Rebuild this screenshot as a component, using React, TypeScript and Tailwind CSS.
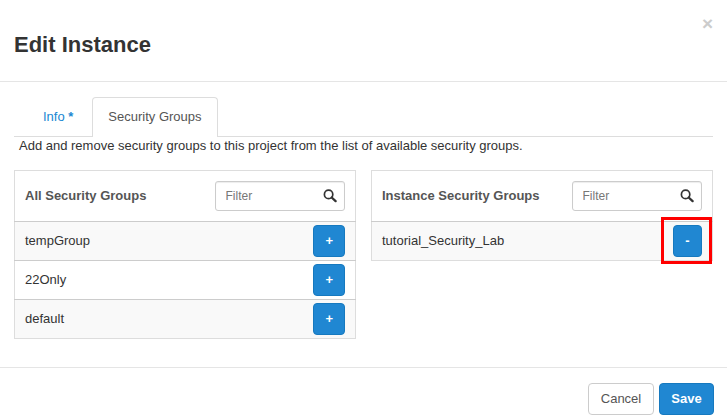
import { useState } from "react";

type Group = { name: string };

type TransferTableProps = {
  title: string;
  groups: Group[];
  action: "+" | "-";
  highlighted?: boolean;
};

function SearchIcon() {
  return (
    <svg
      viewBox="0 0 14 14"
      className="pointer-events-none absolute top-2 right-2 size-[14px]"
      fill="none"
      stroke="#333333"
      aria-hidden="true"
    >
      <circle cx="5.6" cy="5.4" r="4.2" strokeWidth="1.7" />
      <path d="M8.7 8.5 12.6 12.1" strokeWidth="2.3" strokeLinecap="round" />
    </svg>
  );
}

function TransferTable({ title, groups, action, highlighted }: TransferTableProps) {
  const [filter, setFilter] = useState("");
  const rows = groups.filter((group) => group.name.toLowerCase().includes(filter.toLowerCase()));

  return (
    <table className="w-full border-collapse border border-[#dddddd] text-[13px] leading-[18px]">
      <thead>
        <tr className="h-[51px]">
          <th scope="col" className="px-[10px] text-left font-bold text-[#555555]">
            {title}
          </th>
          <th scope="col" className="w-[151px] px-[10px] font-normal">
            <label className="relative block">
              <input
                type="text"
                aria-label={`Filter ${title}`}
                placeholder="Filter"
                value={filter}
                onChange={(event) => setFilter(event.target.value)}
                className="block h-[30px] w-full rounded-[3px] border border-[#cccccc] bg-white pr-7 pl-[10px] text-xs text-[#555555] shadow-[inset_0_1px_1px_rgba(0,0,0,0.075)] placeholder:text-[#777777]"
              />
              <SearchIcon />
            </label>
          </th>
        </tr>
      </thead>
      <tbody>
        {rows.map((group) => (
          <tr key={group.name} className="h-[39px] border-t border-[#cccccc] odd:bg-[#f9f9f9]">
            <td className="px-[10px]">{group.name}</td>
            <td className="px-[10px]">
              <div className="flex justify-end">
                <div className="relative">
                  <button
                    type="button"
                    className="block h-8 min-w-[29px] rounded-[4px] border border-[#1679bf] bg-[#2087d2] px-[11px] text-[13px] font-bold text-white"
                  >
                    {action}
                  </button>
                  {highlighted && (
                    <span className="pointer-events-none absolute -top-2 -right-[10px] -bottom-[7px] -left-3 border-3 border-[#ff0000]" />
                  )}
                </div>
              </div>
            </td>
          </tr>
        ))}
      </tbody>
    </table>
  );
}

const availableGroups: Group[] = [{ name: "tempGroup" }, { name: "22Only" }, { name: "default" }];
const instanceGroups: Group[] = [{ name: "tutorial_Security_Lab" }];

export default function App() {
  return (
    <div className="min-h-screen bg-white font-['Liberation_Sans',Arial,sans-serif] text-[13px] leading-[18px] text-[#333333]">
      <header className="flex items-start justify-between border-b border-[#e5e5e5] px-[14px] pt-[14px] pb-[22px]">
        <h1 className="mt-[17px] text-[22px] leading-7 font-bold">Edit Instance</h1>
        <button type="button" aria-label="Close" className="text-[19px] leading-5 font-bold text-[#cccccc]">
          ×
        </button>
      </header>

      <main className="px-[14px] pt-[15px] pb-7">
        <nav className="flex gap-[3px] border-b border-[#dddddd] pl-[13px]">
          <a href="#info" className="px-4 pt-[11px] pb-[10px] text-[#2087d2]">
            Info <span className="font-bold">*</span>
          </a>
          <a
            href="#security-groups"
            aria-current="page"
            className="-mb-px rounded-t-[4px] border border-b-0 border-[#dddddd] bg-white px-[15px] pt-[10px] pb-[11px] text-[#555555]"
          >
            Security Groups
          </a>
        </nav>

        <p className="px-[5px]">
          Add and remove security groups to this project from the list of available security groups.
        </p>

        <div className="mt-[15px] grid grid-cols-2 items-start gap-[15px]">
          <TransferTable title="All Security Groups" groups={availableGroups} action="+" />
          <TransferTable title="Instance Security Groups" groups={instanceGroups} action="-" highlighted />
        </div>
      </main>

      <footer className="flex justify-end gap-[5px] border-t border-[#e5e5e5] px-[13px] pt-[15px]">
        <button type="button" className="h-8 w-[66px] rounded-[4px] border border-[#cccccc] bg-white text-[#555555]">
          Cancel
        </button>
        <button type="button" className="h-8 w-[55px] rounded-[4px] border border-[#1679bf] bg-[#2087d2] font-bold text-white">
          Save
        </button>
      </footer>
    </div>
  );
}
